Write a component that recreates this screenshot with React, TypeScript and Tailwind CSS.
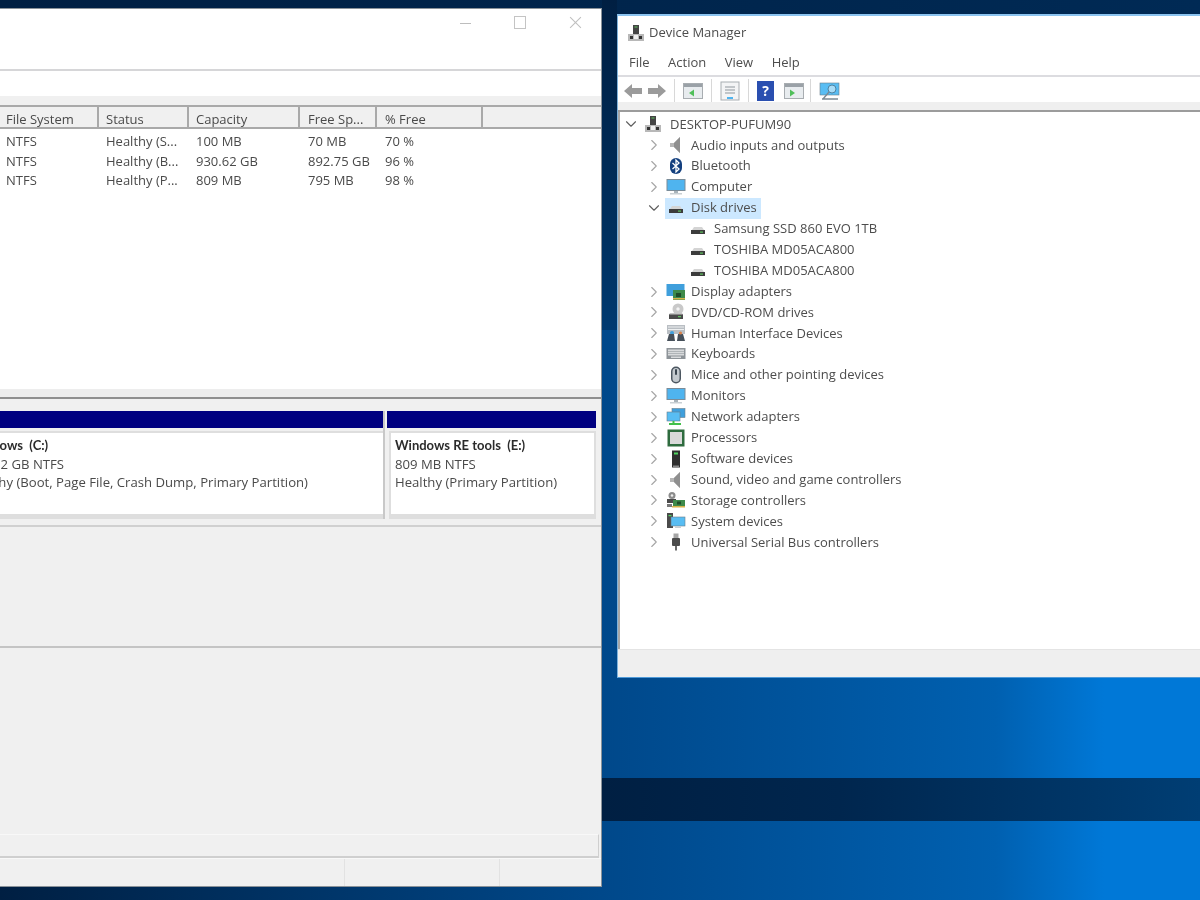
import React from 'react'
import { ChevronDown, ChevronRight } from 'lucide-react'

const columns = [
  { label: 'File System', w: 'w-[99px]', pl: 'pl-[6px]' },
  { label: 'Status', w: 'w-[90px]', pl: 'pl-[7px]' },
  { label: 'Capacity', w: 'w-[111px]', pl: 'pl-[7px]' },
  { label: 'Free Sp...', w: 'w-[77px]', pl: 'pl-[8px]' },
  { label: '% Free', w: 'w-[106px]', pl: 'pl-[8px]' },
]

const volumes = [
  ['NTFS', 'Healthy (S...', '100 MB', '70 MB', '70 %'],
  ['NTFS', 'Healthy (B...', '930.62 GB', '892.75 GB', '96 %'],
  ['NTFS', 'Healthy (P...', '809 MB', '795 MB', '98 %'],
]

const DriveIcon = () => (
  <svg viewBox="0 0 18 18" className="h-[18px] w-[18px]">
    <path d="M3 10 L5 7 H13 L15 10 Z" fill="#d4d4d4" />
    <rect x="2" y="10" width="14" height="4" fill="#3c3c3c" />
    <rect x="11" y="11.5" width="3" height="1.2" fill="#5fc35f" />
  </svg>
)

const PcIcon = () => (
  <svg viewBox="0 0 18 18" className="h-[18px] w-[18px]">
    <rect x="6" y="1" width="6" height="9" fill="#444" />
    <rect x="7.5" y="2.5" width="3" height="1" fill="#5fc35f" />
    <rect x="1" y="10" width="16" height="7" fill="#b8b8b8" />
    <rect x="3" y="12" width="3" height="3" fill="#333" />
    <rect x="12" y="12" width="3" height="3" fill="#333" />
    <rect x="7" y="11" width="4" height="4" fill="#efefef" />
  </svg>
)

const SpeakerIcon = () => (
  <svg viewBox="0 0 18 18" className="h-[18px] w-[18px]">
    <path d="M3 7 H7 L13 1 V17 L7 11 H3 Z" fill="#b5b5b5" />
    <path d="M7 7 L13 1 V17 L7 11 Z" fill="#8f8f8f" />
  </svg>
)

const BluetoothIcon = () => (
  <svg viewBox="0 0 18 18" className="h-[18px] w-[18px]">
    <rect x="3" y="1" width="12" height="16" rx="6" fill="#14407f" />
    <path d="M5.5 6 L12 12 L9 15 V3 L12 6 L5.5 12" fill="none" stroke="#fff" strokeWidth="1.3" />
  </svg>
)

const MonitorIcon = () => (
  <svg viewBox="0 0 20 18" className="h-[18px] w-[20px]">
    <rect x="0.5" y="1" width="19" height="12" fill="#7a8c99" />
    <rect x="1.5" y="2" width="17" height="10" fill="#4fb4ef" />
    <rect x="8" y="13" width="4" height="2" fill="#a9b4bb" />
    <rect x="4" y="15" width="12" height="1.5" fill="#c9d0d4" />
  </svg>
)

const DisplayIcon = () => (
  <svg viewBox="0 0 20 18" className="h-[18px] w-[20px]">
    <rect x="0.5" y="1" width="18" height="12" fill="#3f9fdc" />
    <rect x="7" y="7" width="12" height="10" fill="#3e8a4a" />
    <rect x="10" y="10" width="5" height="4" fill="#1f4d2a" />
    <rect x="7" y="15" width="12" height="1.5" fill="#d6b24a" />
  </svg>
)

const DvdIcon = () => (
  <svg viewBox="0 0 18 18" className="h-[18px] w-[18px]">
    <circle cx="11" cy="6" r="5.5" fill="#c9c9c9" />
    <circle cx="11" cy="6" r="1.7" fill="#f3f3f3" />
    <path d="M2 11 H16 V16 H2 Z" fill="#4a4a4a" />
    <path d="M3 10 H15 L16 11.5 H2 Z" fill="#c4c4c4" />
    <rect x="11" y="13" width="3" height="1.2" fill="#5fc35f" />
  </svg>
)

const HidIcon = () => (
  <svg viewBox="0 0 20 18" className="h-[18px] w-[20px]">
    <rect x="1" y="1" width="18" height="9" fill="#b9bec3" />
    <path d="M2 3 H18 M2 5.5 H18" stroke="#eef0f1" strokeWidth="1" />
    <circle cx="6" cy="9" r="2" fill="#3f9fdc" />
    <path d="M1 17 L3 10 H8 L9 17 Z" fill="#46505a" />
    <path d="M11 17 L12 10 H17 L19 17 Z" fill="#46505a" />
    <circle cx="14.5" cy="9" r="1.6" fill="#d9824a" />
  </svg>
)

const KeyboardIcon = () => (
  <svg viewBox="0 0 20 18" className="h-[18px] w-[20px]">
    <rect x="0.5" y="3" width="19" height="11" fill="#8e9499" />
    <rect x="2" y="4.5" width="16" height="6" fill="#d8dadc" />
    <path d="M2 6.5 H18 M2 8.5 H18" stroke="#a6abaf" strokeWidth="0.8" />
    <rect x="5" y="11.5" width="10" height="1.5" fill="#d8dadc" />
  </svg>
)

const MouseIcon = () => (
  <svg viewBox="0 0 18 18" className="h-[18px] w-[18px]">
    <rect x="4" y="0.5" width="10" height="17" rx="5" fill="#4c5660" />
    <rect x="5.5" y="2" width="7" height="14" rx="3.5" fill="#c3c9ce" />
    <rect x="8" y="3" width="2" height="6" rx="1" fill="#3b4650" />
  </svg>
)

const NetworkIcon = () => (
  <svg viewBox="0 0 20 18" className="h-[18px] w-[20px]">
    <rect x="6" y="0.5" width="13" height="9" fill="#3f9fdc" stroke="#6a7f8d" strokeWidth="0.6" />
    <rect x="1" y="4" width="13" height="9" fill="#58bdf3" stroke="#6a7f8d" strokeWidth="0.6" />
    <path d="M7.5 13 V15 M3 16 H15" stroke="#42c04a" strokeWidth="2" />
  </svg>
)

const CpuIcon = () => (
  <svg viewBox="0 0 18 18" className="h-[18px] w-[18px]">
    <rect x="0.5" y="0.5" width="17" height="17" fill="#2e6b3e" />
    <rect x="3" y="3" width="12" height="12" fill="#d9d9d9" />
  </svg>
)

const TowerIcon = () => (
  <svg viewBox="0 0 18 18" className="h-[18px] w-[18px]">
    <rect x="5" y="0.5" width="8" height="17" fill="#2f2f2f" />
    <rect x="7" y="2.5" width="4" height="2" fill="#4fd45f" />
    <rect x="6" y="15.5" width="6" height="1.5" fill="#8a8a8a" />
  </svg>
)

const StorageIcon = () => (
  <svg viewBox="0 0 20 18" className="h-[18px] w-[20px]">
    <circle cx="6" cy="4.5" r="3.5" fill="#8c8c8c" />
    <circle cx="6" cy="4.5" r="1.3" fill="#eee" />
    <rect x="1" y="8" width="9" height="4" fill="#4a4a4a" />
    <rect x="7" y="9" width="12" height="6" fill="#3e8a4a" />
    <rect x="11" y="10.5" width="4" height="3" fill="#1f4d2a" />
    <rect x="6" y="15" width="13" height="1.5" fill="#d6b24a" />
    <rect x="1" y="13" width="5" height="3" fill="#777" />
  </svg>
)

const SystemIcon = () => (
  <svg viewBox="0 0 20 18" className="h-[18px] w-[20px]">
    <rect x="1" y="1" width="6" height="15" fill="#4a4a4a" />
    <rect x="2.5" y="3" width="3" height="1.2" fill="#4fd45f" />
    <rect x="5" y="5" width="14" height="9" fill="#58bdf3" stroke="#6a7f8d" strokeWidth="0.6" />
    <rect x="9" y="14" width="6" height="2" fill="#c9d0d4" />
  </svg>
)

const UsbIcon = () => (
  <svg viewBox="0 0 18 18" className="h-[18px] w-[18px]">
    <rect x="6.5" y="0.5" width="5" height="5" fill="#a5a5a5" />
    <rect x="5" y="5" width="8" height="8" rx="1" fill="#4b4b4b" />
    <rect x="8" y="13" width="2" height="4.5" fill="#6a6a6a" />
  </svg>
)

const deviceTree = [
  { name: 'Audio inputs and outputs', icon: <SpeakerIcon /> },
  { name: 'Bluetooth', icon: <BluetoothIcon /> },
  { name: 'Computer', icon: <MonitorIcon /> },
]

const deviceTreeRest = [
  { name: 'Display adapters', icon: <DisplayIcon /> },
  { name: 'DVD/CD-ROM drives', icon: <DvdIcon /> },
  { name: 'Human Interface Devices', icon: <HidIcon /> },
  { name: 'Keyboards', icon: <KeyboardIcon /> },
  { name: 'Mice and other pointing devices', icon: <MouseIcon /> },
  { name: 'Monitors', icon: <MonitorIcon /> },
  { name: 'Network adapters', icon: <NetworkIcon /> },
  { name: 'Processors', icon: <CpuIcon /> },
  { name: 'Software devices', icon: <TowerIcon /> },
  { name: 'Sound, video and game controllers', icon: <SpeakerIcon /> },
  { name: 'Storage controllers', icon: <StorageIcon /> },
  { name: 'System devices', icon: <SystemIcon /> },
  { name: 'Universal Serial Bus controllers', icon: <UsbIcon /> },
]

function TreeRow({ name, icon }: { name: string; icon: React.ReactNode }) {
  return (
    <div className="flex h-[20.9px] items-center pl-[25px]">
      <ChevronRight className="h-[18px] w-[18px] text-[#a6a6a6]" strokeWidth={1.5} />
      <span className="ml-[2px] flex w-[21px] justify-center">{icon}</span>
      <span className="ml-[5px]">{name}</span>
    </div>
  )
}

function ToolbarSep() {
  return <div className="mx-[5px] h-[24px] w-px bg-[#d8d8d8]" />
}

function DiskManagement() {
  return (
    <div className="absolute left-0 top-[8px] flex h-[879px] w-[602px] flex-col overflow-hidden border-r border-b border-t border-[#8a9299] bg-[#f0f0f0] text-[13px] text-[#4a4a4a]">
      {/* title bar and menu */}
      <div className="flex h-[62px] justify-end gap-[43px] border-b-2 border-[#d6d6d8] bg-white pr-[19px] pt-[7px]">
        <div className="mt-[7px] h-px w-[11px] bg-[#bdbdbd]" />
        <div className="h-[13px] w-[12px] border border-[#c4c4c4]" />
        <svg viewBox="0 0 12 12" className="h-[13px] w-[13px]">
          <path d="M1 1 L11 11 M11 1 L1 11" stroke="#c0c0c0" strokeWidth="1" />
        </svg>
      </div>
      <div className="h-[25px] bg-white" />
      <div className="h-[9px] bg-[#f0f0f0]" />

      {/* volume list */}
      <div className="flex h-[284px] flex-col bg-white">
        <div className="flex h-[24px] border-y-2 border-y-[#a9a9a9] bg-[#f0f0f0]">
          {columns.map((c) => (
            <div key={c.label} className={`${c.w} ${c.pl} border-r-2 border-[#a9a9a9] leading-[25px]`}>
              {c.label}
            </div>
          ))}
        </div>
        <div className="pt-[3px]">
          {volumes.map((row, i) => (
            <div key={i} className="flex h-[19.5px] items-center">
              {row.map((cell, j) => (
                <div key={j} className={`${columns[j].w} ${columns[j].pl} pr-[2px] whitespace-nowrap`}>
                  {cell}
                </div>
              ))}
            </div>
          ))}
        </div>
      </div>

      <div className="h-[10px] border-b-2 border-[#8f8f8f] bg-[#ededed]" />

      {/* disk map */}
      <div className="flex h-[128px] gap-[2px] border-b-2 border-[#d0d0d0] bg-[#f0f0f0] pb-[6px] pr-[5px] pt-[12px] text-[13.15px]">
        <div className="flex w-[385px] flex-col border-r-2 border-[#c8c8c8]">
          <div className="h-[17px] bg-[#000080]" />
          <div className="mt-[3px] flex-1 overflow-hidden border-t-2 border-b-[5px] border-[#dedede] bg-white leading-[18.5px]">
            <div className="pt-[3px] whitespace-nowrap">
              <div className="ml-[-32px] font-['Lato'] text-[13px] font-bold text-[#2b2b2b]">Windows&nbsp; (C:)</div>
              <div className="ml-[-33px]">930.62 GB NTFS</div>
              <div className="ml-[-34px]">Healthy (Boot, Page File, Crash Dump, Primary Partition)</div>
            </div>
          </div>
        </div>
        <div className="flex min-w-0 flex-1 flex-col">
          <div className="h-[17px] bg-[#000080]" />
          <div className="ml-[2px] mt-[3px] flex-1 border-2 border-b-[5px] border-[#dedede] bg-white pl-[4px] pt-[3px] leading-[18.5px]">
            <div className="font-['Lato'] text-[13px] font-bold text-[#2b2b2b]">Windows RE tools&nbsp; (E:)</div>
            <div>809 MB NTFS</div>
            <div>Healthy (Primary Partition)</div>
          </div>
        </div>
      </div>

      <div className="h-[121px] border-b-2 border-[#c4c4c4] bg-[#f0f0f0]" />
      <div className="flex-1 bg-[#f0f0f0]" />

      {/* scroll bar and status bar */}
      <div className="mr-[2px] h-[24px] border-t border-b-2 border-r border-t-[#f8f8f8] border-b-[#cfcfcf] border-r-[#cfcfcf] bg-[#f0f0f0]" />
      <div className="flex h-[28px] border-t border-[#f8f8f8] bg-[#f0f0f0]">
        <div className="w-[345px] border-r border-[#e2e2e2]" />
        <div className="w-[155px] border-r border-[#e2e2e2]" />
      </div>
    </div>
  )
}

function DeviceManager() {
  return (
    <div className="absolute left-[617px] top-[14px] flex h-[664px] w-[583px] flex-col border-l border-t-2 border-b border-l-[#7fb3dc] border-t-[#8cc4f0] border-b-[#4f9ad8] bg-white text-[13px] text-[#4d4d4d]">
      <div className="flex h-[33px] items-center pl-[9px]">
        <PcIcon />
        <span className="ml-[4px]">Device Manager</span>
      </div>
      <div className="flex h-[26px] items-center gap-[18.5px] pl-[11px] pt-[1px]">
        {['File', 'Action', 'View', 'Help'].map((m) => (
          <span key={m}>{m}</span>
        ))}
      </div>
      <div className="flex h-[27px] items-center border-t-2 border-[#dcdce0] pl-[4px] pt-[3px]">
        <svg viewBox="0 0 44 18" className="mr-[1px] h-[18px] w-[46px]">
          <path d="M1 9 L9 2 V6 H19 V12 H9 V16 Z" fill="#9b9b9b" />
          <path d="M43 9 L35 2 V6 H25 V12 H35 V16 Z" fill="#9b9b9b" />
        </svg>
        <ToolbarSep />
        <svg viewBox="0 0 20 18" className="mx-[3px] h-[18px] w-[20px]">
          <rect x="0.5" y="1.5" width="19" height="15" fill="#e8ecef" stroke="#a8adb1" />
          <rect x="1" y="2" width="18" height="3" fill="#9aa1a7" />
          <path d="M6 11 L11 7.5 V14.5 Z" fill="#4fbf5a" />
        </svg>
        <ToolbarSep />
        <svg viewBox="0 0 20 20" className="mx-[3px] h-[20px] w-[20px]">
          <rect x="1" y="1" width="18" height="18" fill="#f3f4f5" stroke="#a8adb1" />
          <path d="M5 6 H15 M5 9 H15 M5 12 H15" stroke="#8f979d" strokeWidth="1" />
          <rect x="7" y="16" width="6" height="2" fill="#4fb4ef" />
        </svg>
        <ToolbarSep />
        <div className="mx-[3px] flex h-[20px] w-[17px] items-center justify-center bg-[#2a4fb0] text-[14px] font-bold leading-none text-white">?</div>
        <svg viewBox="0 0 20 18" className="ml-[7px] mr-[1px] h-[18px] w-[20px]">
          <rect x="0.5" y="1.5" width="19" height="15" fill="#e8ecef" stroke="#a8adb1" />
          <rect x="1" y="2" width="18" height="3" fill="#9aa1a7" />
          <path d="M6 7.5 L11 11 L6 14.5 Z" fill="#4fbf5a" />
        </svg>
        <ToolbarSep />
        <svg viewBox="0 0 22 20" className="mx-[3px] h-[20px] w-[22px]">
          <rect x="1" y="2" width="19" height="12" fill="#58bdf3" stroke="#6a7f8d" strokeWidth="0.6" />
          <circle cx="13" cy="8" r="4" fill="#a8dcf7" stroke="#3d6f8d" strokeWidth="0.8" />
          <path d="M10 11 L4 18 M3 18 H19" stroke="#7c8a94" strokeWidth="1.4" />
        </svg>
      </div>
      <div className="h-[10px] border-b-2 border-[#9c9c9c] bg-[#efefef]" />

      {/* device tree */}
      <div className="flex-1 border-l-2 border-[#a8a8a8] bg-white pt-[2px]">
        <div className="flex h-[20.9px] items-center pl-[2px]">
          <ChevronDown className="h-[18px] w-[18px] text-[#5f5f5f]" strokeWidth={1.5} />
          <span className="ml-[3px] flex w-[20px] justify-center"><PcIcon /></span>
          <span className="ml-[7px]">DESKTOP-PUFUM90</span>
        </div>
        {deviceTree.map((d) => (
          <TreeRow key={d.name} {...d} />
        ))}
        <div className="flex h-[20.9px] items-center pl-[25px]">
          <ChevronDown className="h-[18px] w-[18px] text-[#5f5f5f]" strokeWidth={1.5} />
          <div className="ml-[2px] flex h-[21px] items-center bg-[#cce8ff] pr-[4px]">
            <span className="flex w-[21px] justify-center"><DriveIcon /></span>
            <span className="ml-[5px]">Disk drives</span>
          </div>
        </div>
        {['Samsung SSD 860 EVO 1TB', 'TOSHIBA MD05ACA800', 'TOSHIBA MD05ACA800'].map((name, i) => (
          <div key={i} className="flex h-[20.9px] items-center pl-[69px]">
            <DriveIcon />
            <span className="ml-[7px]">{name}</span>
          </div>
        ))}
        {deviceTreeRest.map((d) => (
          <TreeRow key={d.name} {...d} />
        ))}
      </div>
      <div className="h-[28px] border-t border-[#e4e4e4] bg-[#efefef]" />
    </div>
  )
}

export default function App() {
  return (
    <div className="relative h-[900px] w-[1200px] overflow-hidden bg-[linear-gradient(90deg,#001f42_0%,#00488a_50%,#0060b0_83%,#0078d7_92%)] blur-[0.4px] font-['Open_Sans','Noto_Sans',sans-serif]">
      {/* wallpaper bands */}
      <div className="absolute inset-x-0 top-0 h-[90px] bg-[linear-gradient(90deg,#001f42,#002a55)]" />
      <div className="absolute left-[602px] top-0 h-[330px] w-[15px] bg-[linear-gradient(180deg,#001f42,#00305e_70%,#003a70)]" />
      <div className="absolute inset-x-0 top-[778px] h-[43px] bg-[linear-gradient(90deg,#001f42_50%,#00264e_70%,#003e74_100%)]" />
      <DiskManagement />
      <DeviceManager />
    </div>
  )
}
